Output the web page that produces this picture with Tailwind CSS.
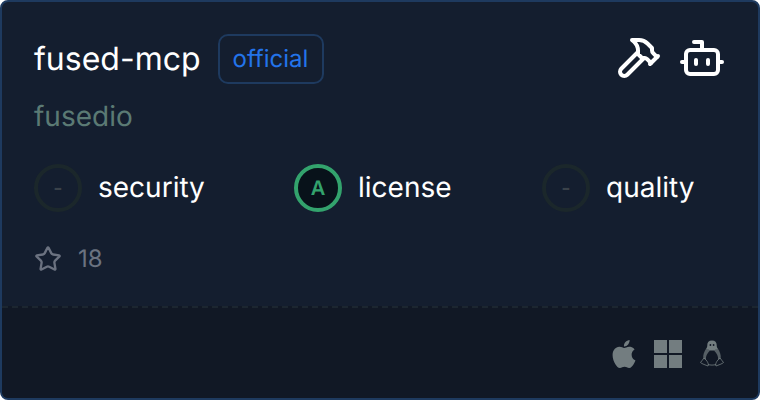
<!DOCTYPE html>
<html lang="en">
<head>
  <meta charset="UTF-8" />
  <title>fused-mcp</title>
  <script src="https://cdn.jsdelivr.net/npm/@tailwindcss/browser@4"></script>
</head>
<body class="bg-white font-['Inter',sans-serif] antialiased [text-rendering:geometricPrecision]">
  <div class="w-[760px] h-[400px] flex flex-col rounded-lg border-2 border-[#1e3a5f] bg-[#141e2f] overflow-hidden">
    <div class="h-[304px] px-8 pt-8">
      <div class="flex justify-between items-start">
        <div class="flex items-center gap-[17px]">
          <span class="text-[32px] leading-[40px] text-white">fused-mcp</span>
          <span class="h-[50px] pl-[13px] pr-[14px] flex items-center rounded-[10px] border-2 border-[#1e3a5f] text-[24px] text-[#2374ea]">official</span>
        </div>
        <div class="flex gap-4 text-white">
          <svg class="w-12 h-12" viewBox="0 0 24 24" fill="none" stroke="currentColor" stroke-width="2" stroke-linecap="round" stroke-linejoin="round"><path d="m15 12-8.373 8.373a1 1 0 1 1-3-3L12 9"/><path d="m18 15 4-4"/><path d="m21.5 11.500-1.914-1.914A2 2 0 0 1 19 8.172V7l-2.260-2.260a6 6 0 0 0-4.202-1.756L9 2.960l.92.82A6.180 6.180 0 0 1 12 8.400V10l2 2h1.172a2 2 0 0 1 1.414.586L18.500 14.500"/></svg>
          <svg class="w-12 h-12" viewBox="0 0 24 24" fill="none" stroke="currentColor" stroke-width="2" stroke-linecap="round" stroke-linejoin="round"><path d="M12 8V4H8"/><rect width="16" height="12" x="4" y="8" rx="2"/><path d="M2 14h2"/><path d="M20 14h2"/><path d="M15 13v2"/><path d="M9 13v2"/></svg>
        </div>
      </div>
      <div class="mt-3 text-[28px] leading-[40px] text-[#5b7a74]">fusedio</div>
      <div class="mt-7 grid grid-cols-[260px_248px_auto]">
        <div class="flex items-center gap-4">
          <span class="w-12 h-12 rounded-full border-4 border-[#1b272b] flex items-center justify-center text-[20px] font-semibold text-[#3a424a]">-</span>
          <span class="pb-[2px] text-[28px] text-white">security</span>
        </div>
        <div class="flex items-center gap-4">
          <span class="w-12 h-12 rounded-full border-4 border-[#33a36d] bg-[#08121a] flex items-center justify-center text-[20px] font-semibold text-[#33a36d]">A</span>
          <span class="pb-[2px] text-[28px] text-white">license</span>
        </div>
        <div class="flex items-center gap-4">
          <span class="w-12 h-12 rounded-full border-4 border-[#1b272b] flex items-center justify-center text-[20px] font-semibold text-[#3a424a]">-</span>
          <span class="pb-[2px] text-[28px] text-white">quality</span>
        </div>
      </div>
      <div class="mt-[29px] flex items-center gap-4 text-[#6b7280]">
        <svg class="w-7 h-7" viewBox="0 0 24 24" fill="none" stroke="currentColor" stroke-width="2" stroke-linecap="round" stroke-linejoin="round"><path d="M11.525 2.295a.53.53 0 0 1 .95 0l2.31 4.679a2.123 2.123 0 0 0 1.595 1.16l5.166.756a.53.53 0 0 1 .294.904l-3.736 3.638a2.123 2.123 0 0 0-.611 1.878l.882 5.14a.53.53 0 0 1-.771.56l-4.618-2.428a2.122 2.122 0 0 0-1.973 0L6.396 21.01a.53.53 0 0 1-.77-.56l.881-5.139a2.122 2.122 0 0 0-.611-1.879L2.16 9.795a.53.53 0 0 1 .294-.906l5.165-.755a2.122 2.122 0 0 0 1.597-1.16z"/></svg>
        <span class="text-[24px]">18</span>
      </div>
    </div>
    <div class="flex-1 border-t-2 border-dashed border-[#1c2630] bg-[#111825] flex justify-end items-start gap-4 pt-[32px] pr-[32px]">
      <svg class="w-7 h-7 text-[#737d80]" viewBox="0 0 24 24" fill="currentColor"><path d="M12.152 6.896c-.948 0-2.415-1.078-3.96-1.04-2.04.027-3.91 1.183-4.961 3.014-2.117 3.675-.546 9.103 1.519 12.09 1.013 1.454 2.208 3.09 3.792 3.039 1.52-.065 2.09-.987 3.935-.987 1.831 0 2.35.987 3.96.948 1.637-.026 2.676-1.48 3.676-2.948 1.156-1.688 1.636-3.325 1.662-3.415-.039-.013-3.182-1.221-3.22-4.857-.026-3.04 2.48-4.494 2.597-4.559-1.429-2.09-3.623-2.324-4.39-2.376-2-.156-3.675 1.09-4.61 1.09zM15.53 3.83c.843-1.012 1.4-2.427 1.245-3.83-1.207.052-2.662.805-3.532 1.818-.78.896-1.454 2.338-1.273 3.714 1.338.104 2.715-.688 3.559-1.701"/></svg>
      <div class="w-7 h-7 grid grid-cols-2 gap-[2px] text-[#737d80]">
        <span class="bg-current"></span><span class="bg-current"></span><span class="bg-current"></span><span class="bg-current"></span>
      </div>
      <svg class="w-7 h-7 text-[#737d80]" viewBox="0 0 28 28" fill="none" stroke="currentColor" stroke-width="0.8" stroke-linejoin="round">
        <path fill="currentColor" stroke="none" d="M14 0.500c-3.200 0-4.800 2-4.700 4.500 0 1.500-.3 2.500-1 3.500l3.700 2h4l3.700-2c-.7-1-1-2-1-3.500 0-2.500-1.500-4.500-4.700-4.500z"/>
        <circle cx="12.400" cy="5" r=".9" fill="#111825" stroke="none"/><circle cx="15.600" cy="5" r=".9" fill="#111825" stroke="none"/>
        <path fill="currentColor" fill-opacity=".7" stroke="none" d="M8.500 8C6 12 4.800 15 5.300 18.500l2.700 1.500C7.500 16 9 13.500 12 10.500zM19.500 8C22 12 23.200 15 22.700 18.500l-2.700 1.500C20.500 16 19 13.500 16 10.500z"/>
        <path d="M10 24.500c2.500.8 5.500.8 8 0"/>
        <path d="M6 18c-1 1.500-2.500 3-3.500 4.500 1.500 1.500 5.200 2.500 7.500 3.500.8-1.500 0-3-.8-4.500-.8-1.500-2-2.500-3.200-3.500zM22 18c1 1.500 2.500 3 3.500 4.500-1.500 1.500-5.200 2.500-7.500 3.500-.8-1.500 0-3 .8-4.500.8-1.500 2-2.500 3.200-3.500z"/>
      </svg>
    </div>
  </div>
</body>
</html>
